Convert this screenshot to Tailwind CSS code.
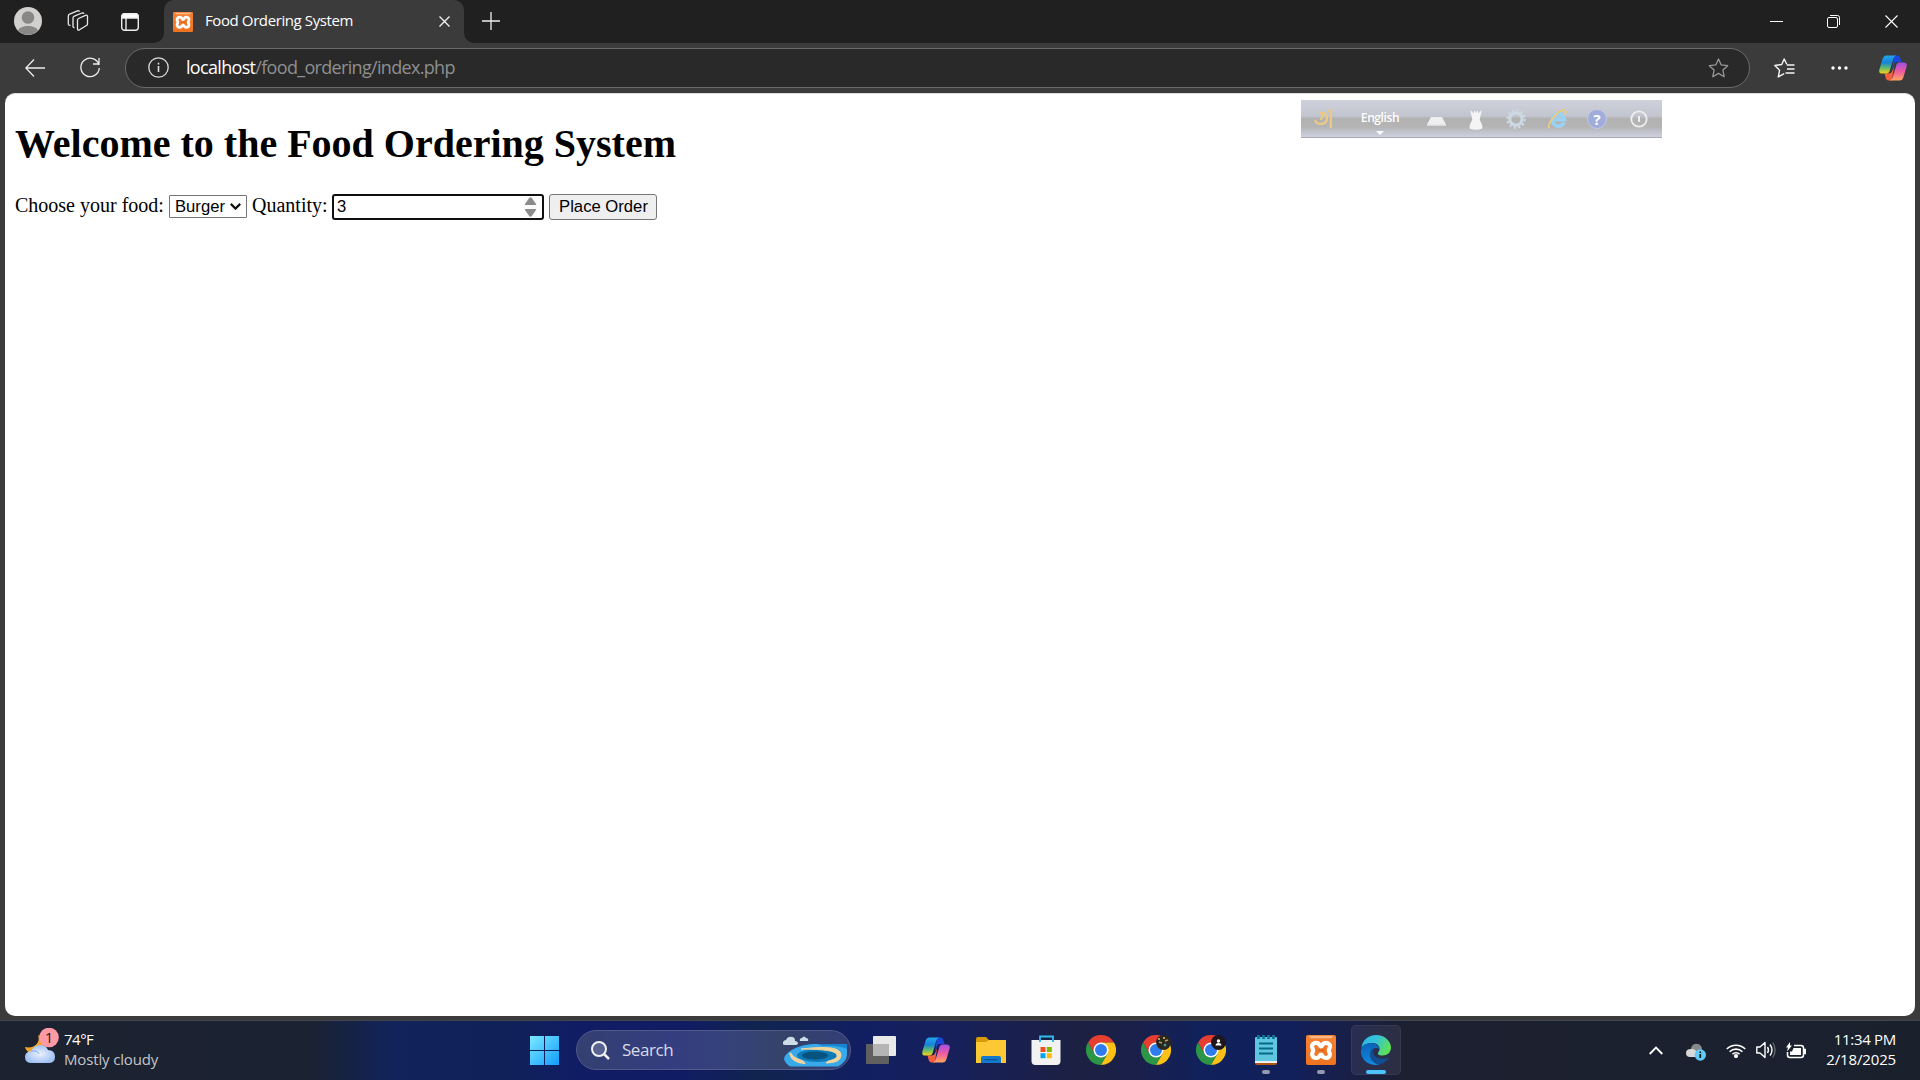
<!DOCTYPE html>
<html lang="en">
<head>
<meta charset="utf-8">
<title>Food Ordering System</title>
<script src="https://cdn.jsdelivr.net/npm/@tailwindcss/browser@4"></script>
</head>
<body class="w-[1920px] h-[1080px] overflow-hidden bg-[#3b3b3b] font-['Open_Sans',sans-serif] flex flex-col">
<svg class="absolute w-0 h-0">
  <defs>
    <linearGradient id="cpA" x1="0" y1="0" x2="0" y2="1"><stop offset="0" stop-color="#22a7ee"/><stop offset=".4" stop-color="#1783d8"/><stop offset=".68" stop-color="#5fb970"/><stop offset="1" stop-color="#f5d311"/></linearGradient>
    <linearGradient id="cpB" x1="0" y1="0" x2="0" y2="1"><stop offset="0" stop-color="#a04fe8"/><stop offset=".5" stop-color="#ee5ba0"/><stop offset="1" stop-color="#ffa760"/></linearGradient>
    <linearGradient id="org" x1="0" y1="0" x2="0" y2="1"><stop offset="0" stop-color="#f58235"/><stop offset="1" stop-color="#ef7320"/></linearGradient>
    <symbol id="copilot" viewBox="0 0 28 26">
      <path d="M15 .5h3.500q2 0 2.600 2l1.400 4.500h-4.500q-2.500 0-3.200 2.400L13 15z" fill="#1b48d8"/>
      <path d="M13 25.500H9.500q-2 0-2.600-2L5.500 18.500H10q2.500 0 3.200-2.400L15 11z" fill="#f4603e"/>
      <path d="M7.500.5H17q-2 .5-2.800 3.500l-3.400 11.500Q10 18.500 7.500 18.500H3.200Q-.5 18.500.4 14.500L3.500 4Q4.500.5 7.500.5z" fill="url(#cpA)"/>
      <path d="M20.500 25.500H11q2-.5 2.800-3.500l3.400-11.500Q18 7.500 20.500 7.500h4.300q3.700 0 2.800 4L24.500 22q-1 3.500-4 3.500z" fill="url(#cpB)"/>
    </symbol>
    <symbol id="xampp" viewBox="0 0 30 30">
      <rect width="30" height="30" rx="2" fill="url(#org)"/>
      <path d="M3 1h24l-1.500 2.200h-21z" fill="#fab88a"/>
      <path d="M15 11.300C13.500 11.300 13.600 7.800 10.300 7.800 7.300 7.800 5.900 9.800 6.100 11.800c.2 1.500 1 2.200 1 3.700s-.8 1.900-1 3.500c-.2 2 1.200 4 4.200 4 3.300 0 3.200-3.500 4.700-3.500s1.400 3.500 4.700 3.500c3 0 4.400-2 4.200-4-.2-1.600-1-2-1-3.500s.8-2.200 1-3.700c.2-2-1.200-4-4.200-4-3.300 0-3.200 3.500-4.700 3.500z" fill="#ee7728" stroke="#fff" stroke-width="4.200"/>
      <path d="M12 15.400h6" stroke="#d9661e" stroke-width="1.500"/>
    </symbol>
    <symbol id="chrome" viewBox="-15 -15 30 30">
      <path d="M-13-7.500A15 15 0 0 1 13-7.500H0L-6.500 3.750z" fill="#e63e30"/>
      <path d="M-13-7.500-6.500 3.750H6.500L0 15A15 15 0 0 1-13-7.500" fill="#2a9646"/>
      <path d="M13-7.500A15 15 0 0 1 0 15L6.500 3.750 0-7.500z" fill="#fbc116"/>
      <circle r="7.500" fill="#fff"/><circle r="6" fill="#2f7cee"/>
    </symbol>
  </defs>
</svg>

<!-- Tab strip -->
<header class="h-[43px] shrink-0 bg-[#202020] flex items-end text-white">
  <div class="w-[154px] h-[43px] flex items-center pl-[14px] pb-[1px]">
    <svg class="w-7 h-7" viewBox="0 0 28 28"><circle cx="14" cy="14" r="14" fill="#d2d0ce"/><circle cx="14" cy="10.500" r="6.300" fill="#8a8886"/><path d="M4 23.500C6 17.500 22 17.500 24 23.500A14 14 0 0 1 4 23.500z" fill="#8a8886"/></svg>
    <svg class="w-[22px] h-[22px] ml-[25px]" viewBox="0 0 22 22" fill="none" stroke="#e8e8e8" stroke-width="1.300" stroke-linejoin="round"><path d="M10.500 10.200Q10.500 9 11.500 8.500L18.500 5.300q2-.8 2 1.200v7.500q0 1-1 1.500l-7 4.300q-2 1-2-1z"/><path d="M7.500 17.500q-1.500.2-1.500-1.300V8q0-1.300 1.300-1.800L15 3q1.500-.4 2 .8"/><path d="M3.500 15.300Q1.300 15.800 1.300 13.500V6q0-1.300 1.300-1.800L10.500.9q1.800-.5 2 .7"/></svg>
    <svg class="w-[18px] h-[18px] ml-8 mt-[1px]" viewBox="0 0 18 18" fill="none" stroke="#eee" stroke-width="1.400"><rect x=".7" y=".7" width="16.600" height="16.600" rx="3"/><path d="M1 3.500Q1 .7 3.500.7h11Q17 .7 17 3.500V5H1z" fill="#fff"/><path d="M5 5v12"/></svg>
  </div>
  <div class="w-[10px] h-[10px] bg-[#3b3b3b]"><div class="w-full h-full bg-[#202020] rounded-br-[10px]"></div></div>
  <div class="w-[300px] h-[43px] bg-[#3b3b3b] rounded-t-[10px] flex items-center pl-[9px] pr-[14px]">
    <svg class="w-5 h-5"><use href="#xampp"/></svg>
    <span class="ml-3 grow whitespace-nowrap text-[15px] leading-5 tracking-[-0.4px] pb-[4px]">Food Ordering System</span>
    <svg class="w-[11px] h-[11px]" viewBox="0 0 11 11" stroke="#f0f0f0" stroke-width="1.400"><path d="M.5.5l10 10M10.500.5l-10 10"/></svg>
  </div>
  <div class="w-[10px] h-[10px] bg-[#3b3b3b]"><div class="w-full h-full bg-[#202020] rounded-bl-[10px]"></div></div>
  <div class="grow h-[43px] flex items-center pl-2 pr-[22px]">
    <svg class="w-[18px] h-[18px] mb-[1px]" viewBox="0 0 18 18" stroke="#eee" stroke-width="1.300"><path d="M9 0v18M0 9h18"/></svg>
    <span class="grow"></span>
    <svg class="w-[13px] h-[13px] mr-11" viewBox="0 0 13 13" stroke="#fff" stroke-width="1"><path d="M0 6.500h13"/></svg>
    <svg class="w-[13px] h-[13px] mr-[45px]" viewBox="0 0 13 13" fill="none" stroke="#fff"><rect x=".5" y="2.500" width="10" height="10" rx="1.500"/><path d="M3 .5h7.500q2 0 2 2V10"/></svg>
    <svg class="w-[13px] h-[13px]" viewBox="0 0 13 13" stroke="#fff" stroke-width="1.100"><path d="M.5.500l12 12M12.500.5l-12 12"/></svg>
  </div>
</header>

<!-- Address bar -->
<nav class="h-[50px] shrink-0 flex items-center pl-[25px] pr-[13px] pb-[1px]">
  <svg class="w-5 h-5" viewBox="0 0 20 20" fill="none" stroke="#eee" stroke-width="1.300"><path d="M20 10H1M9 1.500.8 10 9 18.500"/></svg>
  <svg class="w-5 h-[21px] ml-[35px]" viewBox="0 0 20 21" fill="none" stroke="#eee" stroke-width="1.300"><path d="M19 8A9.200 9.200 0 1 0 19.300 11M19 1v6h-6"/></svg>
  <div class="ml-[25px] w-[1625px] h-10 rounded-full bg-[#292929] border border-[#6a6a6a] flex items-center pl-[22px] pr-5">
    <svg class="w-[21px] h-[21px]" viewBox="0 0 21 21" fill="none" stroke="#ddd" stroke-width="1.300"><circle cx="10.500" cy="10.500" r="9.700"/><path d="M10.500 9v6M10.500 5.700v1.800" stroke-width="1.600"/></svg>
    <span class="ml-[17px] grow whitespace-nowrap text-[18px] leading-6 tracking-[-0.68px] text-[#8f8f8f] pb-[1px]"><span class="text-white">localhost</span>/food_ordering/index.php</span>
    <svg class="w-[21px] h-5" viewBox="0 0 21 20" fill="none" stroke="#979797" stroke-width="1.300" stroke-linejoin="round"><path d="M10.500 1l2.700 5.900 6.500.8-4.800 4.400 1.300 6.600-5.700-3.300-5.700 3.300 1.300-6.600L1.300 7.700l6.500-.8z"/></svg>
  </div>
  <svg class="w-[21px] h-5 ml-6" viewBox="0 0 21 20" fill="none" stroke="#f5f5f5" stroke-width="1.400" stroke-linejoin="round"><path d="M12.800 6.300 10.200 1 7.700 6.500.8 7.500l4.800 4.700L4.300 19l5.900-3.300M12.800 7h7.700M13 11h7.500M11.500 15h9"/></svg>
  <svg class="w-[17px] h-1 ml-9" viewBox="0 0 17 4" fill="#fff"><circle cx="2" cy="2" r="1.700"/><circle cx="8.500" cy="2" r="1.700"/><circle cx="15" cy="2" r="1.700"/></svg>
  <svg class="w-7 h-[26px] ml-[31px]"><use href="#copilot"/></svg>
</nav>

<!-- Page -->
<main class="relative h-[923px] shrink-0 mx-[5px] bg-white rounded-[10px] border-t border-[#ddd] text-black font-['Liberation_Serif',serif] px-[10px] pt-[27px]">
  <h1 class="text-[40px] leading-[46px] font-bold whitespace-nowrap">Welcome to the Food Ordering System</h1>
  <form class="flex mt-[27px] h-[26px] items-center text-[20px] leading-[23px] whitespace-nowrap">
    <label class="w-[154px] -mt-[4px]">Choose your food:</label>
    <div class="w-[78px] h-[23px] -mt-px border border-[#767676] rounded-[1px] flex items-center pl-[5px] font-['Liberation_Sans',sans-serif] text-[16.667px] leading-[20px]"><span class="grow">Burger</span><svg class="w-[11px] h-[7px] mr-[5px]" viewBox="0 0 11 7" fill="none" stroke="#111" stroke-width="2.200"><path d="M.8.900l4.700 4.700L10.200.9"/></svg></div>
    <label class="ml-[5px] w-[80px] -mt-[4px]">Quantity:</label>
    <div class="w-[212px] h-[26px] border-2 border-[#101010] rounded-[3px] flex items-center pl-[3px] pr-[5px] font-['Liberation_Sans',sans-serif] text-[16.667px] leading-[20px]"><span class="grow -mt-[1px]">3</span>
      <svg class="w-[13px] h-5" viewBox="0 0 13 20" fill="#8b8b8b"><rect x="-2" width="17" height="20" fill="#fafafa"/><path d="M5 1.200Q6.500-.8 8 1.200L12 7q.5 1-.8 1H1.800Q.5 8 1 7zM5 18.800q1.500 2 3 0L12 13q.5-1-.8-1H1.800Q.5 12 1 13z"/></svg></div>
    <button type="button" class="ml-[5px] w-[108px] h-[26px] border border-[#767676] rounded-[3px] bg-[#efefef] font-['Liberation_Sans',sans-serif] text-[16.667px] leading-[20px] pl-px">Place Order</button>
  </form>

  <!-- Floating input-language bar -->
  <aside class="absolute left-[1296px] top-[6px] w-[361px] h-[38px] border-b border-[#a9aab2] bg-[linear-gradient(#cfd1dc_0%,#c2c4ce_44%,#b2b2b2_50%,#b4b4b5_72%,#cdd0e0_100%)] flex items-center pl-[13px] pr-[13px] font-['Open_Sans',sans-serif]">
    <svg class="w-[19px] h-[20px]" viewBox="0 0 19 20" fill="none" stroke="#ecca83" stroke-width="2.200"><path d="M1 11c2 6 12 5 12-2 0-5-5-6-8-5 4-1 5 6 1 6M14 1.500h4M16.800 2v17"/></svg>
    <div class="ml-[27px] w-[40px] flex flex-col items-center pt-[7px] text-white"><span class="text-[12px] leading-[18px] font-semibold tracking-[-0.4px]">English</span><svg class="w-2 h-1 mt-[4px]" viewBox="0 0 8 4" fill="#fff"><path d="M0 0h8L4 4z"/></svg></div>
    <svg class="w-[19px] h-[10px] ml-[27px] mt-[4px]" viewBox="0 0 19 10"><path d="M4 1h11l4 7.500H0z" fill="#eceef0"/><path d="M0 9h19" stroke="#fff"/></svg>
    <svg class="w-[14px] h-[20px] ml-[23px] mt-[2px]" viewBox="0 0 14 20" fill="#f4f4f4"><path d="M2 .5 5 3.500V1h1l1 2 1-2h1v2.500L12 .5l.5 1.500-1.800 7c.5 3 3.300 5 2.600 9.500q-6.300 2.500-12.600 0C0 14 2.800 12 3.300 9L1.500 2z"/></svg>
    <svg class="w-5 h-5 ml-[23px] mt-[1px]" viewBox="0 0 20 20" fill="none" stroke="#ccd8e2"><circle cx="10" cy="10" r="6.200" stroke-width="3.200"/><circle cx="10" cy="10" r="8.700" stroke-width="2.200" stroke-dasharray="2.400 2.155"/></svg>
    <svg class="w-5 h-5 ml-[21px] mt-[1px]" viewBox="0 0 20 20" fill="none"><path d="M6 10.500h11.500c0-7.500-11-7.500-12 0-.5 7.500 9 8.500 11.500 3" stroke="#9bd2f1" stroke-width="3.800"/><path d="M3 19C-3 18 12-1 18 1.200c1.500.8.700 3-.5 4.800" stroke="#edcc7c" stroke-width="1.700"/></svg>
    <div class="ml-5 w-[20px] h-5 rounded-full bg-[#a0addb] border border-[#c5cbe2] text-white text-[15px] font-bold leading-[18px] text-center">?</div>
    <svg class="w-[18px] h-[18px] ml-[23px]" viewBox="0 0 18 18" fill="none" stroke="#efefef" stroke-width="1.800"><circle cx="9" cy="9" r="7.700"/><path d="M9 6v6" stroke-width="2"/></svg>
  </aside>
</main>
<div class="h-[4px] shrink-0"></div>

<!-- Taskbar -->
<footer class="h-[60px] shrink-0 border-t border-[#42454f] flex items-center text-white pb-px bg-[linear-gradient(90deg,#1c2230_0px,#1b2231_310px,#11235a_390px,#10215a_520px,#101c64_580px,#101c64_680px,#11244f_760px,#111f62_860px,#17205b_950px,#1c2042_1080px,#1a204b_1140px,#10215c_1200px,#11205b_1290px,#181f4a_1340px,#1c2030_1410px,#1a212d_1920px)]">
  <div class="w-[517px] h-full flex pl-[25px] pt-[7px]">
    <svg class="w-[34px] h-9" viewBox="0 0 34 36"><defs><radialGradient id="cld"><stop stop-color="#edf1fc"/><stop offset="1" stop-color="#a3c3f5"/></radialGradient></defs><path d="M13 7c3 8-4 14-13 12 1 6 9 8 15 4s5-13-2-16z" fill="#f1a528"/><path d="M7 35q-7 0-7-6 0-5 6-6 3-6 9-6t8 5q7 0 7 7 0 6-7 6z" fill="url(#cld)"/><path d="M6 23q6-1 8 3" stroke="#82a9ef" fill="none"/><circle cx="24" cy="9.500" r="9.800" fill="#ff99a4"/><text x="24" y="15" text-anchor="middle" font-size="15" fill="#222" font-family="Open Sans">1</text></svg>
    <div class="ml-[5px] text-[15px] leading-5 whitespace-nowrap pt-[1px]"><div class="tracking-[-0.5px]">74°F</div><div class="text-[#c3c5ca] tracking-[-0.15px]">Mostly cloudy</div></div>
  </div>
  <div class="w-[59px] pl-[13px]"><svg class="w-[29px] h-[29px]" viewBox="0 0 29 29"><defs><linearGradient id="win" gradientUnits="userSpaceOnUse" x1="0" y1="0" x2="29" y2="29"><stop stop-color="#7aeaff"/><stop offset="1" stop-color="#129bff"/></linearGradient></defs><path d="M0 0h14v14H0zM15 0h14v14H15zM0 15h14v14H0zM15 15h14v14H15z" fill="url(#win)"/></svg></div>
  <div class="w-[275px] h-10 rounded-full border border-[#51598a] bg-[linear-gradient(90deg,#334070,#343d80_35%,#34427a_55%,#344369_75%,#333e78)] flex items-center pl-[14px] pr-[3px]">
    <svg class="w-[19px] h-[19px]" viewBox="0 0 19 19" fill="#596390" stroke="#f0f0f5" stroke-width="2"><circle cx="8" cy="8" r="7"/><path d="M13 13l5 5" stroke-width="2.500"/></svg>
    <span class="ml-3 grow text-[17px] leading-6 tracking-[-0.45px] text-[#d9dbea]">Search</span>
    <svg class="w-[64px] h-[31px] mt-[3px]" viewBox="0 0 64 31"><path d="M2 9q-3 0-2-3 1-2 3-2 2-4 6-3 3 0 3 4 3 0 3 3l-2 1zM17 5q-1-3 2-3 2-3 4 0 3 0 2 3z" fill="#cddde8"/><path d="M64 8H34C15 8 2 16 1 23q1 4 6 7.500h48q9-5 9-12z" fill="#38a9eb"/><path d="M35 8h29v5q-10-4-25-3z" fill="#1685cf"/><ellipse cx="34" cy="19.500" rx="20" ry="6.500" fill="#0d7bb8"/><ellipse cx="32" cy="19.500" rx="13" ry="4" fill="#07527f"/><path d="M7 17q2 9 14 10-1-2-5-3-6-2-9-7z" fill="#f2d49c" stroke="#f2d49c" stroke-width="2"/><path d="M18 13q40-5 40 6 0 8-15 8 1-2 6-3 6-2 5-5-1-6-36-6z" fill="#f2d49c" stroke="#f2d49c"/></svg>
  </div>
  <div class="flex items-center h-full ml-[2.500px] [&>div]:w-[55px] [&>div]:h-[50px] [&>div]:relative [&>div]:flex [&>div]:items-center [&>div]:justify-center">
    <div><svg class="w-[30px] h-[30px]" viewBox="0 0 30 30"><rect y="9" width="23" height="20" rx="1" fill="#606060"/><rect x="7" y="1" width="23" height="20" rx="1" fill="#e9e9ea"/><path d="M7 9h16v12H7z" fill="#b5b5b5"/></svg></div>
    <div><svg class="w-7 h-[26px]"><use href="#copilot"/></svg></div>
    <div><svg class="w-[30px] h-[30px]" viewBox="0 0 30 30"><path d="M0 4q0-2 2-2h8l3 3h15q2 0 2 2v3H0z" fill="#d99a0a"/><path d="M0 7h10l3-2h17v23H0z" fill="#fcc935"/><path d="M5 28v-5q0-2 2-2h16q2 0 2 2v5z" fill="#1279cb"/><path d="M8.500 24.700h13" stroke="#0b4c91"/></svg></div>
    <div><svg class="w-[30px] h-[30px]" viewBox="0 0 30 30"><path d="M9 7V1.500h13V7" fill="none" stroke="#2fbdf0" stroke-width="1.800"/><path d="M.5 5H29.500v21q0 4-4 4h-21q-4 0-4-4z" fill="#f2f2f2"/><path d="M8 5v2h2V5zM21 5v2h2V5z" fill="#2fbdf0"/><path d="M9.500 12h5v5h-5z" fill="#f25022"/><path d="M15.800 12h5v5h-5z" fill="#7fba00"/><path d="M9.500 18.200h5v5h-5z" fill="#00a4ef"/><path d="M15.800 18.200h5v5h-5z" fill="#ffb900"/></svg></div>
    <div><svg class="w-[30px] h-[30px]"><use href="#chrome"/></svg></div>
    <div><svg class="w-[30px] h-[30px]"><use href="#chrome"/><circle cx="22.500" cy="7.500" r="7.500" fill="#292720"/><path d="M17 4h2M22 3h2M18 7l3 1M24 6l3-1" stroke="#b99b55" stroke-width="1.800"/><circle cx="24" cy="10" r="1.500" fill="#4e8c83"/></svg></div>
    <div><svg class="w-[30px] h-[30px]"><use href="#chrome"/><circle cx="22.500" cy="7.500" r="7.500" fill="#1d171d"/><circle cx="22.500" cy="6" r="1.700" fill="#fff"/><path d="M19.500 10.500q0-2.500 3-2.500t3 2.500z" fill="#fff"/></svg></div>
    <div><svg class="w-[22px] h-[30px]" viewBox="0 0 22 30"><path d="M0 25h22v3q0 2-2 2H2q-2 0-2-2z" fill="#b35417"/><path d="M0 25h22v3H0z" fill="#eee"/><path d="M0 3q0-1 1-1h20q1 0 1 1v23H0z" fill="#5fc6e0"/><path d="M4 8.500h14M4 13.500h14M4 18.500h14" stroke="#096985" stroke-width="1.800"/><path d="M3.500 0v4M8.500 0v4M13.500 0v4M18.500 0v4" stroke="#107794" stroke-width="2.800"/></svg><span class="absolute left-[23.500px] bottom-[1px] w-2 h-1 rounded-full bg-[#9698ad]"></span></div>
    <div><svg class="w-[30px] h-[30px]"><use href="#xampp"/></svg><span class="absolute left-[23.500px] bottom-[1px] w-2 h-1 rounded-full bg-[#9698ad]"></span></div>
    <div><span class="absolute left-[2.500px] top-0 w-[50px] h-[50px] rounded-[5px] border border-white/5 bg-white/7"></span>
      <svg class="relative w-[30px] h-[30px]" viewBox="0 0 30 30"><defs><linearGradient id="eg" x1="0" y1="0" x2="1" y2=".4"><stop stop-color="#2bb5ed"/><stop offset=".55" stop-color="#36c4d4"/><stop offset="1" stop-color="#5be05a"/></linearGradient><linearGradient id="eb" x1="0" y1="0" x2="0" y2="1"><stop stop-color="#0b62b6"/><stop offset="1" stop-color="#1089df"/></linearGradient></defs><path d="M.3 13C1.500 5 7.500 0 15 0c9 0 15 6.500 15 12.500 0 5-4 8-8.500 8-4 0-5.500-1.500-4-3.500 3-4-.5-9-6-9C5.500 8 1.500 10.500.3 13z" fill="url(#eg)"/><path d="M0 15C1 10 5.500 8 10 8c5 0 8 3 8 6-2-2-8-1-8 5 0 7 5 10 9 10.500C9 32-1 25 0 15z" fill="url(#eb)"/><path d="M12 13c-7 7-1 15 6 16.700 4-.7 8-4 10-7.200-5 2.500-16 1.500-16-6z" fill="#134d91"/></svg>
      <span class="absolute left-[17.500px] bottom-[1px] w-5 h-1 rounded-full bg-[#4cc2ff]"></span></div>
  </div>
  <div class="grow"></div>
  <div class="flex items-center pr-6">
    <svg class="w-[14px] h-[9px]" viewBox="0 0 14 9" fill="none" stroke="#fff" stroke-width="1.800"><path d="M.7 8 7 1.500 13.300 8"/></svg>
    <svg class="w-[20px] h-[18px] ml-[23px] mt-[3px]" viewBox="0 0 20 18"><path d="M5 5q2-5 7-4 4 1 4 6l-9 6z" fill="#87888b"/><path d="M4 14q-4 0-4-4t5-4q3-1 6 3v5z" fill="#d8d8d8"/><circle cx="14.300" cy="12" r="5.700" fill="#62cbf8"/><path d="M14.300 11v4M14.300 8.500v1.500" stroke="#111" stroke-width="1.600"/></svg>
    <svg class="w-5 h-[15px] ml-5" viewBox="0 0 20 15" fill="none" stroke="#fff" stroke-width="1.600"><path d="M.8 6a13 13 0 0 1 18.400 0M3.600 8.800a9 9 0 0 1 12.800 0M6.400 11.300a5 5 0 0 1 7.200 0"/><circle cx="10" cy="13" r="1.300" fill="#fff"/></svg>
    <svg class="w-5 h-[18px] ml-[10px]" viewBox="0 0 20 18" fill="none" stroke="#fff" stroke-width="1.400" stroke-linejoin="round"><path d="M.8 6H4l5-4.500v15L4 12H.8zM11.500 6q2 3 0 6M14 3.500q4 5.500 0 11"/><path d="M16.800 1.500q4.500 7.500 0 15" stroke="#62656c"/></svg>
    <svg class="w-5 h-[17px] ml-[10px]" viewBox="0 0 20 17" fill="none" stroke="#fff" stroke-width="1.500"><path d="M8 3.500h7q2.500 0 2.500 2.500v7q0 2.500-2.500 2.500H4Q1.500 15.500 1.500 13V10"/><path d="M18 7.500h1.500v4H18" fill="#fff"/><path d="M7.500 6H15v7H4V9.500h2z" fill="#fff" stroke="none"/><path d="M4 0 0 5.500h2L1 9.500l5-6H4z" fill="#fff" stroke="none"/></svg>
    <div class="w-[90px] text-right text-[15px] leading-5 whitespace-nowrap pb-[2px]"><div class="tracking-[-0.3px]">11:34 PM</div><div class="tracking-[-0.15px]">2/18/2025</div></div>
  </div>
</footer>
</body>
</html>
